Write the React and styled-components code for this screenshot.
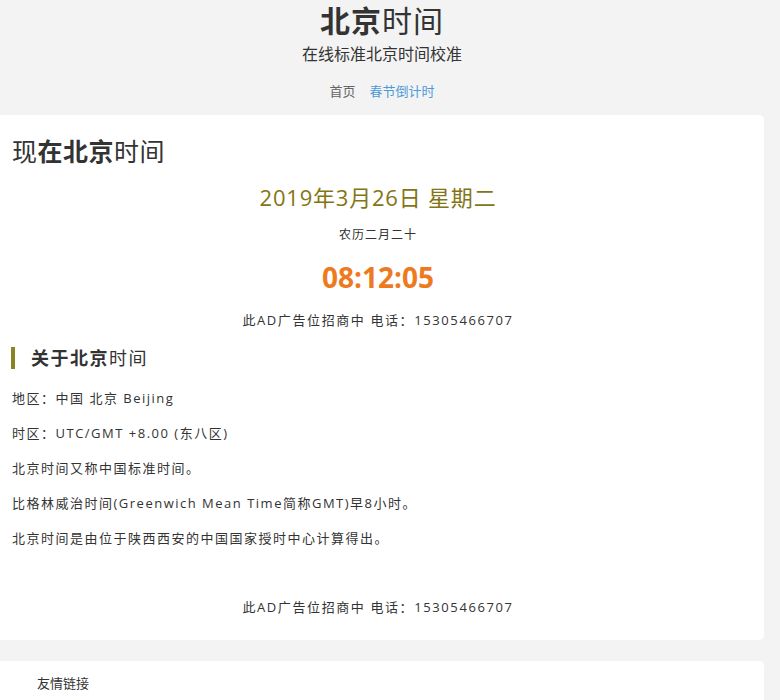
import React from "react";
import styled, { createGlobalStyle } from "styled-components";

const Global = createGlobalStyle`
  html, body {
    margin: 0;
    padding: 0;
    background: #f3f3f3;
    font-family: "Open Sans", "Noto Sans CJK SC", sans-serif;
    color: #333;
  }
`;

const Page = styled.div`
  width: 764px;
`;

const Header = styled.header`
  text-align: center;
  padding-top: 2px;
`;

const SiteTitle = styled.h1`
  margin: 0;
  font-size: 30px;
  line-height: 38px;
  font-weight: 400;
  letter-spacing: 1px;
  color: #333;
  b { font-weight: 700; }
`;

const SubTitle = styled.p`
  margin: 2px 0 0;
  font-size: 16px;
  line-height: 24px;
  color: #333;
`;

const Nav = styled.nav`
  margin-top: 15px;
  display: flex;
  justify-content: center;
  gap: 14px;
  font-size: 13px;
  line-height: 20px;
`;

const NavLink = styled.a`
  color: ${p => (p.$active ? "#4d9ad8" : "#666")};
  text-decoration: none;
`;

const Card = styled.section`
  background: #fff;
  border-radius: 0 5px 5px 0;
  margin-top: ${p => p.$top || 0}px;
  padding: ${p => p.$pad || "0 12px"};
`;

const NowTitle = styled.h2`
  margin: 0;
  padding-top: 20px;
  font-size: 25px;
  line-height: 32px;
  font-weight: 400;
  letter-spacing: 0.5px;
  color: #333;
  b { font-weight: 700; }
`;

const Center = styled.div`
  text-align: center;
`;

const DateLine = styled.div`
  margin-top: 16px;
  font-size: 22px;
  line-height: 28px;
  color: #847514;
  letter-spacing: 0.8px;
`;

const Lunar = styled.div`
  margin-top: 15px;
  font-size: 12px;
  line-height: 18px;
  letter-spacing: 1px;
  color: #333;
`;

const Clock = styled.div`
  margin-top: 16px;
  font-size: 28px;
  line-height: 34px;
  font-weight: 700;
  color: #ee7a1f;
`;

const Ad = styled.div`
  margin-top: ${p => p.$top}px;
  font-size: 13px;
  line-height: 20px;
  letter-spacing: 1.6px;
  color: #333;
`;

const SectionHead = styled.h3`
  margin: 16px 0 0;
  display: flex;
  align-items: center;
  font-size: 18px;
  line-height: 24px;
  font-weight: 400;
  letter-spacing: 1.5px;
  color: #333;
  b { font-weight: 700; }
  &::before {
    content: "";
    width: 4px;
    height: 22px;
    background: #8a8520;
    margin-right: 16px;
    margin-left: -1px;
  }
`;

const InfoList = styled.div`
  margin-top: 18px;
  display: flex;
  flex-direction: column;
  gap: 15px;
`;

const Info = styled.p`
  margin: 0;
  font-size: 13px;
  line-height: 20px;
  letter-spacing: 1.5px;
  color: #333;
`;

const LinksTitle = styled.div`
  font-size: 13px;
  line-height: 20px;
  color: #333;
`;

export default function App() {
  return (
    <Page>
      <Global />
      <Header>
        <SiteTitle><b>北京</b>时间</SiteTitle>
        <SubTitle>在线标准北京时间校准</SubTitle>
        <Nav>
          <NavLink href="#">首页</NavLink>
          <NavLink href="#" $active>春节倒计时</NavLink>
        </Nav>
      </Header>

      <Card $top={14} $pad="0 20px 23px 12px">
        <NowTitle>现<b>在北京</b>时间</NowTitle>
        <Center>
          <DateLine>2019年3月26日 星期二</DateLine>
          <Lunar>农历二月二十</Lunar>
          <Clock>08:12:05</Clock>
          <Ad $top={16}>此AD广告位招商中 电话：15305466707</Ad>
        </Center>
        <SectionHead><b>关于北京</b>时间</SectionHead>
        <InfoList>
          <Info>地区：中国 北京 Beijing</Info>
          <Info>时区：UTC/GMT +8.00 (东八区)</Info>
          <Info>北京时间又称中国标准时间。</Info>
          <Info>比格林威治时间(Greenwich Mean Time简称GMT)早8小时。</Info>
          <Info>北京时间是由位于陕西西安的中国国家授时中心计算得出。</Info>
        </InfoList>
        <Center>
          <Ad $top={49}>此AD广告位招商中 电话：15305466707</Ad>
        </Center>
      </Card>

      <Card $top={21} $pad="12px 37px 20px">
        <LinksTitle>友情链接</LinksTitle>
      </Card>
    </Page>
  );
}
